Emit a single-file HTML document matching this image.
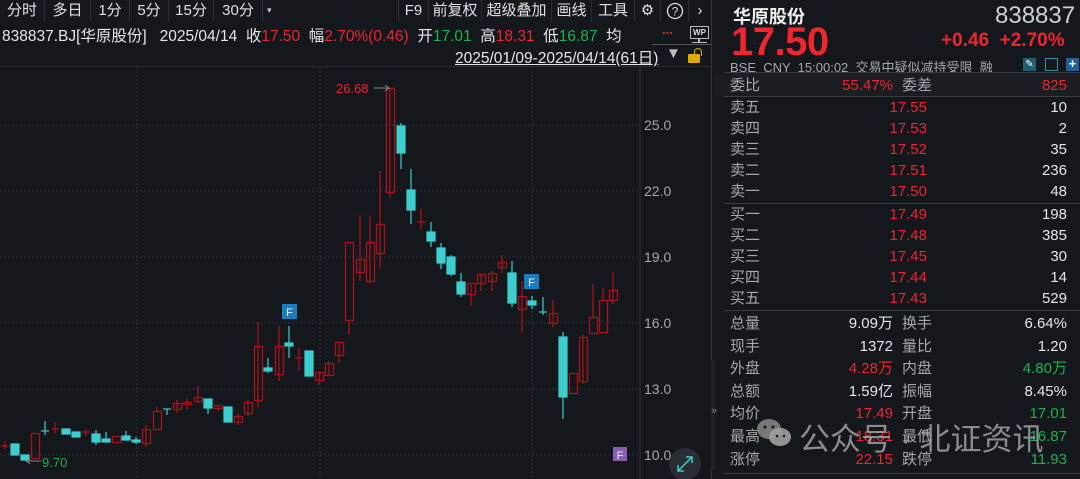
<!DOCTYPE html>
<html><head><meta charset="utf-8"><style>
*{margin:0;padding:0;box-sizing:border-box}
body{width:1080px;height:479px;background:#14171c;font-family:"Liberation Sans","Noto Sans CJK SC",sans-serif;color:#d8d8d8;position:relative;overflow:hidden}
.a{position:absolute;white-space:nowrap}
.r{color:#f0262f}.g{color:#1fb34a}.w{color:#e6e6e6}.gr{color:#a8a8a8}
.tab{position:absolute;top:0;height:22px;line-height:22px;font-size:15px;color:#e0e0e0;border-right:1px solid #2a2d33;text-align:center}
.lbl{position:absolute;font-size:15px;line-height:18px;color:#a8a8a8}
.v{position:absolute;font-size:15px;line-height:18px;text-align:right}
</style></head><body>
<!-- top toolbar -->
<div class="tab" style="left:0;width:45px">分时</div>
<div class="tab" style="left:45px;width:46px">多日</div>
<div class="tab" style="left:91px;width:39px">1分</div>
<div class="tab" style="left:130px;width:39px">5分</div>
<div class="tab" style="left:169px;width:45px">15分</div>
<div class="tab" style="left:214px;width:49px">30分</div>
<div class="a" style="left:267px;top:5px;font-size:9px;color:#ccc">▾</div>
<div class="tab" style="left:398px;width:31px;border-left:1px solid #2a2d33">F9</div>
<div class="tab" style="left:429px;width:53px">前复权</div>
<div class="tab" style="left:482px;width:70px">超级叠加</div>
<div class="tab" style="left:552px;width:40px">画线</div>
<div class="tab" style="left:592px;width:43px">工具</div>
<div class="tab" style="left:635px;width:26px">⚙</div>
<div class="tab" style="left:661px;width:28px"><svg width="18" height="18" viewBox="0 0 18 18" style="margin-top:2px"><circle cx="9" cy="9" r="7.5" fill="none" stroke="#ddd" stroke-width="1.3"/><text x="9" y="13.5" font-size="12" text-anchor="middle" fill="#ddd" font-family="Liberation Sans">?</text></svg></div>
<div class="tab" style="left:689px;width:22px;border:none">›</div>
<!-- info row -->
<div class="a" style="left:2px;top:24px;font-size:15.5px;color:#e6e6e6">838837.BJ[华原股份] &nbsp; 2025/04/14 &nbsp;收<span class="r">17.50</span> &nbsp;幅<span class="r">2.70%(0.46)</span> &nbsp;开<span class="g">17.01</span> &nbsp;高<span class="r">18.31</span> &nbsp;低<span class="g">16.87</span> &nbsp;均</div>
<div class="a r" style="left:662px;top:22px;font-size:13px;font-weight:bold">...</div>
<div class="a" style="left:690px;top:26px;width:19px;height:13px;border:1px solid #bbb;font-size:8px;color:#ddd;text-align:center;line-height:11px;font-weight:bold">WP</div>
<div class="a" style="left:698px;top:39px;width:2px;height:3px;background:#bbb"></div>
<div class="a" style="left:692px;top:42px;width:15px;height:1px;background:#bbb"></div>
<div class="a" style="left:652px;top:44px;width:60px;height:1px;background:#555"></div>
<!-- date range -->
<div class="a" style="left:455px;top:46px;font-size:15.5px;color:#e6e6e6;text-decoration:underline">2025/01/09-2025/04/14(61日)</div>
<div class="a" style="left:666px;top:45px;font-size:15px;color:#bbb">▼</div>
<div class="a" style="left:688px;top:54px;width:12px;height:9px;background:#e0a800;border-radius:1px"></div>
<div class="a" style="left:694px;top:48px;width:8px;height:8px;border:1.5px solid #e0a800;border-bottom:none;border-radius:4px 4px 0 0"></div>
<div class="a" style="left:0;top:66px;width:712px;height:1px;background:#2a2d33"></div>
<!-- chart -->
<svg class="a" style="left:0;top:0" width="712" height="479">
<g stroke="#2e3238" stroke-dasharray="2,2" stroke-width="1">
<line x1="0" y1="125" x2="640" y2="125"/><line x1="0" y1="191" x2="640" y2="191"/><line x1="0" y1="257" x2="640" y2="257"/><line x1="0" y1="323" x2="640" y2="323"/><line x1="0" y1="389" x2="640" y2="389"/><line x1="0" y1="455" x2="640" y2="455"/>
<line x1="137" y1="67" x2="137" y2="479"/><line x1="320" y1="67" x2="320" y2="479"/><line x1="532" y1="67" x2="532" y2="479"/>
</g>
<line x1="640" y1="67" x2="640" y2="479" stroke="#2e3238"/>
<line x1="711.5" y1="0" x2="711.5" y2="479" stroke="#33363c"/>
<g font-family="Liberation Sans" font-size="14" fill="#a8a8a8">
<text x="644" y="130">25.0</text><text x="644" y="196">22.0</text><text x="644" y="262">19.0</text><text x="644" y="328">16.0</text><text x="644" y="394">13.0</text><text x="644" y="460">10.0</text>
</g>
<g stroke="#a8121a" stroke-width="1.3" fill="none">
<line x1="5" y1="441" x2="5" y2="449"/><line x1="1" y1="446" x2="9" y2="446"/>
<rect x="31.5" y="433.5" width="8" height="25"/>
<line x1="55" y1="422" x2="55" y2="433"/><line x1="51" y1="429" x2="59" y2="429"/>
<line x1="86" y1="429" x2="86" y2="436"/><line x1="82" y1="432" x2="90" y2="432"/>
<rect x="112.5" y="436.5" width="8" height="6"/>
<line x1="146" y1="425" x2="146" y2="447"/><rect x="142.5" y="429.5" width="8" height="14"/>
<line x1="157" y1="407" x2="157" y2="411"/><rect x="153.5" y="411.5" width="8" height="18"/>
<line x1="177" y1="400" x2="177" y2="413"/><rect x="173.5" y="403.5" width="8" height="6"/>
<line x1="187" y1="399" x2="187" y2="409"/><rect x="183.5" y="402.5" width="8" height="2"/>
<line x1="198" y1="386" x2="198" y2="403"/><rect x="194.5" y="397.5" width="8" height="4"/>
<line x1="218" y1="405" x2="218" y2="411"/><rect x="214.5" y="405.5" width="8" height="3"/>
<line x1="238" y1="414" x2="238" y2="425"/><rect x="234.5" y="416.5" width="8" height="6"/>
<line x1="248" y1="400" x2="248" y2="416"/><rect x="244.5" y="402.5" width="8" height="11"/>
<line x1="258" y1="322" x2="258" y2="407"/><rect x="254.5" y="346.5" width="8" height="54"/>
<line x1="279" y1="326" x2="279" y2="381"/><rect x="275.5" y="346.5" width="8" height="28"/>
<line x1="299" y1="348" x2="299" y2="371"/><line x1="295" y1="358" x2="303" y2="358"/>
<line x1="319" y1="372" x2="319" y2="385"/><rect x="315.5" y="372.5" width="8" height="8"/>
<line x1="329" y1="361" x2="329" y2="376"/><rect x="325.5" y="363.5" width="8" height="12"/>
<line x1="339" y1="342" x2="339" y2="363"/><rect x="335.5" y="342.5" width="8" height="13"/>
<line x1="349" y1="320" x2="349" y2="335"/><rect x="345.5" y="242.5" width="8" height="78"/>
<line x1="360" y1="215" x2="360" y2="281"/><rect x="356.5" y="259.5" width="8" height="13"/>
<line x1="370" y1="216" x2="370" y2="283"/><rect x="366.5" y="242.5" width="8" height="39"/>
<line x1="380" y1="171" x2="380" y2="268"/><rect x="376.5" y="224.5" width="8" height="29"/>
<line x1="390" y1="88" x2="390" y2="198"/><rect x="386.5" y="88.5" width="8" height="104"/>
<line x1="421" y1="209" x2="421" y2="230"/><line x1="417" y1="222" x2="425" y2="222"/>
<line x1="471" y1="283" x2="471" y2="306"/><rect x="467.5" y="283.5" width="8" height="11"/>
<line x1="481" y1="274" x2="481" y2="291"/><rect x="477.5" y="274.5" width="8" height="9"/>
<line x1="492" y1="271" x2="492" y2="291"/><rect x="488.5" y="273.5" width="8" height="8"/>
<line x1="502" y1="255" x2="502" y2="273"/><rect x="498.5" y="262.5" width="8" height="5"/>
<line x1="522" y1="281" x2="522" y2="333"/><rect x="518.5" y="296.5" width="8" height="13"/>
<line x1="553" y1="300" x2="553" y2="327"/><rect x="549.5" y="313.5" width="8" height="10"/>
<rect x="569.5" y="373.5" width="8" height="20"/>
<line x1="583" y1="335" x2="583" y2="384"/><rect x="579.5" y="337.5" width="8" height="44"/>
<line x1="593" y1="284" x2="593" y2="317"/><rect x="589.5" y="317.5" width="8" height="16"/>
<line x1="603" y1="288" x2="603" y2="300"/><rect x="599.5" y="300.5" width="8" height="32"/>
<line x1="613" y1="272" x2="613" y2="304"/><rect x="609.5" y="290.5" width="8" height="10"/>
</g>
<g stroke="#3dcfd0" stroke-width="1.2" fill="#3dcfd0">
<rect x="11" y="444" width="8" height="11"/>
<rect x="21" y="455" width="8" height="5"/>
<line x1="45" y1="421" x2="45" y2="435"/><line x1="41" y1="431" x2="49" y2="431"/>
<rect x="62" y="429" width="8" height="5"/>
<rect x="72" y="432" width="8" height="5"/>
<rect x="92" y="434" width="8" height="8"/><line x1="96" y1="430" x2="96" y2="445"/>
<line x1="106" y1="432" x2="106" y2="442"/><rect x="102" y="439" width="8" height="3"/>
<line x1="126" y1="431" x2="126" y2="440"/><rect x="122" y="436" width="8" height="4"/>
<line x1="136" y1="437" x2="136" y2="444"/><rect x="132" y="440" width="8" height="2"/>
<line x1="167" y1="409" x2="167" y2="415"/><line x1="163" y1="409" x2="171" y2="409"/>
<line x1="208" y1="399" x2="208" y2="414"/><rect x="204" y="399" width="8" height="9"/>
<rect x="224" y="407" width="8" height="15"/>
<line x1="268" y1="358" x2="268" y2="373"/><rect x="264" y="368" width="8" height="3"/>
<line x1="289" y1="326" x2="289" y2="358"/><rect x="285" y="343" width="8" height="3"/>
<rect x="305" y="351" width="8" height="25"/>
<line x1="401" y1="123" x2="401" y2="169"/><rect x="397" y="126" width="8" height="27"/>
<line x1="411" y1="169" x2="411" y2="224"/><rect x="407" y="190" width="8" height="20"/>
<line x1="431" y1="222" x2="431" y2="247"/><rect x="427" y="232" width="8" height="9"/>
<line x1="441" y1="243" x2="441" y2="269"/><rect x="437" y="248" width="8" height="15"/>
<line x1="451" y1="255" x2="451" y2="276"/><rect x="447" y="257" width="8" height="17"/>
<line x1="461" y1="273" x2="461" y2="297"/><rect x="457" y="282" width="8" height="12"/>
<line x1="512" y1="261" x2="512" y2="307"/><rect x="508" y="273" width="8" height="30"/>
<line x1="532" y1="296" x2="532" y2="309"/><rect x="528" y="301" width="8" height="4"/>
<line x1="543" y1="297" x2="543" y2="315"/><line x1="539" y1="312" x2="547" y2="312"/>
<line x1="563" y1="332" x2="563" y2="419"/><rect x="559" y="337" width="8" height="60"/>
</g>
<rect x="282" y="304" width="15" height="15" fill="#1a7fc0"/><text x="289.5" y="316" font-size="11" fill="#eee" text-anchor="middle" font-family="Liberation Sans">F</text>
<rect x="524" y="274" width="15" height="15" fill="#1a7fc0"/><text x="531.5" y="286" font-size="11" fill="#eee" text-anchor="middle" font-family="Liberation Sans">F</text>
<rect x="613" y="447" width="14" height="14" fill="#8a5db0"/><text x="620" y="459" font-size="11" fill="#eee" text-anchor="middle" font-family="Liberation Sans">F</text>
<text x="336" y="93" font-size="13" fill="#f0262f" font-family="Liberation Sans">26.68</text>
<line x1="374" y1="88" x2="389" y2="88" stroke="#888"/><path d="M385 85 L389 88 L385 91" stroke="#888" fill="none"/>
<line x1="27" y1="461" x2="41" y2="461" stroke="#888"/><path d="M30 458 L26 461 L30 464" stroke="#888" fill="none"/>
<text x="42" y="467" font-size="13" fill="#1fb34a" font-family="Liberation Sans">9.70</text>
<circle cx="685" cy="464" r="16" fill="#2a2d33"/>
<path d="M678 471 L692 457 M686 457 L692 457 L692 463 M678 465 L678 471 L684 471" stroke="#3dcfd0" stroke-width="1.5" fill="none"/>
</svg>
<!-- right panel -->
<div class="a" style="left:711px;top:360px;width:4px;height:110px;background:#1e2126"></div>
<div class="a" style="left:711px;top:405px;font-size:11px;color:#888">»</div>
<div class="a" style="left:733px;top:3px;font-size:18px;font-weight:bold;color:#f0f0f0">华原股份</div>
<div class="a" style="left:995px;top:2px;font-size:24px;color:#d0d0d0">838837</div>
<div class="a r" style="left:731px;top:20px;font-size:40px;font-weight:bold;letter-spacing:-0.5px">17.50</div>
<div class="a r" style="left:941px;top:30px;font-size:19px;font-weight:bold">+0.46 &nbsp;+2.70%</div>
<div class="a" style="left:730px;top:57px;font-size:13px;color:#a8a8a8">BSE &nbsp;CNY &nbsp;15:00:02 &nbsp;交易中疑似减持受限 &nbsp;融</div>
<div class="a" style="left:1023px;top:58px;width:13px;height:13px;background:#1f5f70;color:#fff;font-size:10px;text-align:center;line-height:13px">✎</div>
<div class="a" style="left:1045px;top:58px;width:13px;height:13px;border:1px solid #3a8fb0"></div>
<div class="a" style="left:1066px;top:58px;width:13px;height:13px;background:#1f5f9a;color:#fff;font-size:13px;text-align:center;line-height:12px;font-weight:bold">+</div>
<div class="a" style="left:724px;top:72px;width:356px;height:1px;background:#3a3d44"></div>
<div class="a" style="left:714px;top:73px;width:366px;height:23px;background:#1a1d22"></div>
<div class="lbl" style="left:730px;top:77px">委比</div>
<div class="v r" style="left:800px;width:93px;top:77px">55.47%</div>
<div class="lbl" style="left:902px;top:77px">委差</div>
<div class="v r" style="left:980px;width:87px;top:77px">825</div>
<div class="a" style="left:724px;top:96px;width:356px;height:1px;background:#3a3d44"></div>
<div class="a" style="left:724px;top:203px;width:356px;height:1px;background:#3a3d44"></div>
<div class="a" style="left:724px;top:310px;width:356px;height:1px;background:#3a3d44"></div>
<div class="a" style="left:724px;top:473px;width:356px;height:1px;background:#3a3d44"></div>

<div class="lbl" style="left:730px;top:99px">卖五</div><div class="v r" style="left:850px;width:77px;top:99px">17.55</div><div class="v w" style="left:980px;width:87px;top:99px">10</div>
<div class="lbl" style="left:730px;top:120px">卖四</div><div class="v r" style="left:850px;width:77px;top:120px">17.53</div><div class="v w" style="left:980px;width:87px;top:120px">2</div>
<div class="lbl" style="left:730px;top:141px">卖三</div><div class="v r" style="left:850px;width:77px;top:141px">17.52</div><div class="v w" style="left:980px;width:87px;top:141px">35</div>
<div class="lbl" style="left:730px;top:162px">卖二</div><div class="v r" style="left:850px;width:77px;top:162px">17.51</div><div class="v w" style="left:980px;width:87px;top:162px">236</div>
<div class="lbl" style="left:730px;top:183px">卖一</div><div class="v r" style="left:850px;width:77px;top:183px">17.50</div><div class="v w" style="left:980px;width:87px;top:183px">48</div>

<div class="lbl" style="left:730px;top:206px">买一</div><div class="v r" style="left:850px;width:77px;top:206px">17.49</div><div class="v w" style="left:980px;width:87px;top:206px">198</div>
<div class="lbl" style="left:730px;top:227px">买二</div><div class="v r" style="left:850px;width:77px;top:227px">17.48</div><div class="v w" style="left:980px;width:87px;top:227px">385</div>
<div class="lbl" style="left:730px;top:248px">买三</div><div class="v r" style="left:850px;width:77px;top:248px">17.45</div><div class="v w" style="left:980px;width:87px;top:248px">30</div>
<div class="lbl" style="left:730px;top:269px">买四</div><div class="v r" style="left:850px;width:77px;top:269px">17.44</div><div class="v w" style="left:980px;width:87px;top:269px">14</div>
<div class="lbl" style="left:730px;top:290px">买五</div><div class="v r" style="left:850px;width:77px;top:290px">17.43</div><div class="v w" style="left:980px;width:87px;top:290px">529</div>

<div class="lbl" style="left:730px;top:315px">总量</div><div class="v w" style="left:800px;width:93px;top:315px">9.09万</div><div class="lbl" style="left:902px;top:315px">换手</div><div class="v w" style="left:980px;width:87px;top:315px">6.64%</div>
<div class="lbl" style="left:730px;top:338px">现手</div><div class="v w" style="left:800px;width:93px;top:338px">1372</div><div class="lbl" style="left:902px;top:338px">量比</div><div class="v w" style="left:980px;width:87px;top:338px">1.20</div>
<div class="lbl" style="left:730px;top:360px">外盘</div><div class="v r" style="left:800px;width:93px;top:360px">4.28万</div><div class="lbl" style="left:902px;top:360px">内盘</div><div class="v g" style="left:980px;width:87px;top:360px">4.80万</div>
<div class="lbl" style="left:730px;top:383px">总额</div><div class="v w" style="left:800px;width:93px;top:383px">1.59亿</div><div class="lbl" style="left:902px;top:383px">振幅</div><div class="v w" style="left:980px;width:87px;top:383px">8.45%</div>
<div class="lbl" style="left:730px;top:405px">均价</div><div class="v r" style="left:800px;width:93px;top:405px">17.49</div><div class="lbl" style="left:902px;top:405px">开盘</div><div class="v g" style="left:980px;width:87px;top:405px">17.01</div>
<div class="lbl" style="left:730px;top:428px">最高</div><div class="v r" style="left:800px;width:93px;top:428px">18.31</div><div class="lbl" style="left:902px;top:428px">最低</div><div class="v g" style="left:980px;width:87px;top:428px">16.87</div>
<div class="lbl" style="left:730px;top:451px">涨停</div><div class="v r" style="left:800px;width:93px;top:451px">22.15</div><div class="lbl" style="left:902px;top:451px">跌停</div><div class="v g" style="left:980px;width:87px;top:451px">11.93</div>
<!-- watermark -->
<svg class="a" style="left:756px;top:417px" width="36" height="32" viewBox="0 0 36 32"><ellipse cx="13" cy="12" rx="12" ry="10" fill="#8a8a8a" opacity="0.85"/><ellipse cx="24" cy="20" rx="11" ry="9" fill="#a0a0a0" opacity="0.9"/><circle cx="9" cy="10" r="1.5" fill="#14171c"/><circle cx="17" cy="10" r="1.5" fill="#14171c"/><circle cx="21" cy="19" r="1.3" fill="#14171c"/><circle cx="28" cy="19" r="1.3" fill="#14171c"/></svg>
<div class="a" style="left:799px;top:414px;font-size:31px;color:rgba(180,180,180,0.75)">公众号 · 北证资讯</div>
</body></html>
